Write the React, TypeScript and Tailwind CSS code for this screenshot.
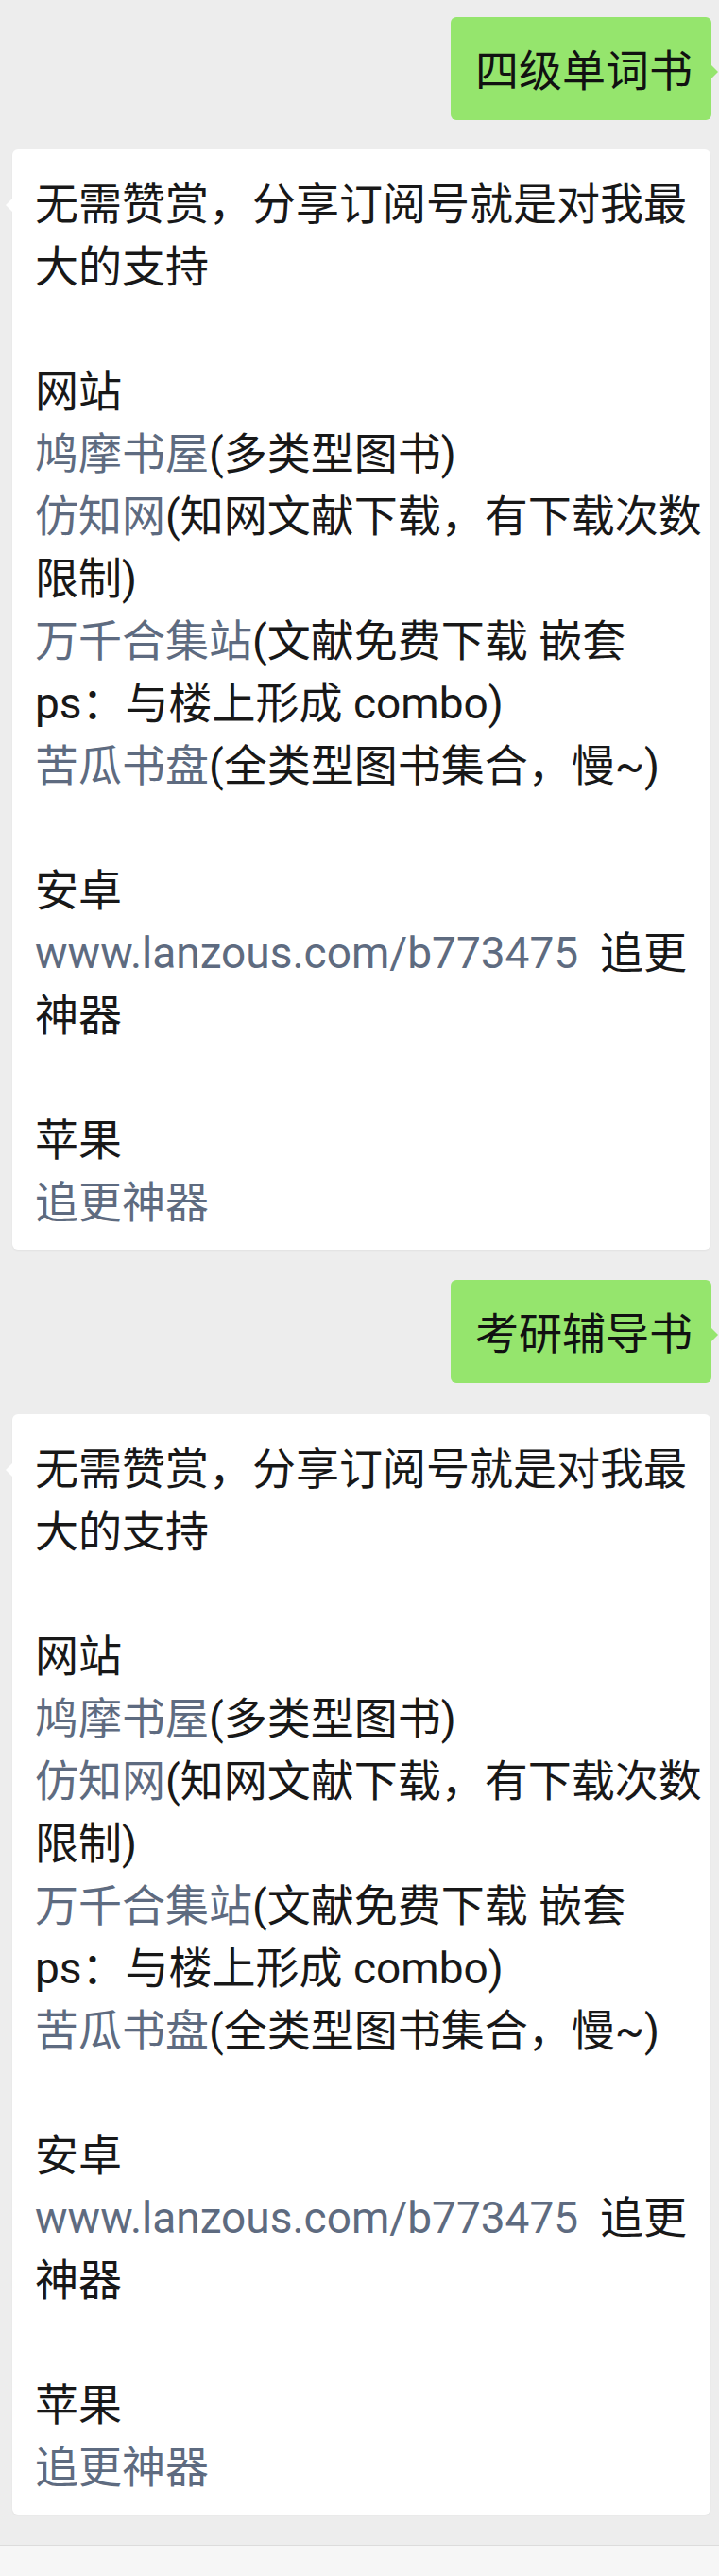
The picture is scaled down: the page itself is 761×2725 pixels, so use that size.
import type { ReactNode } from 'react'

const link = 'text-[#5e6b80]'

function Sent({ children }: { children: ReactNode }) {
  return (
    <div className="self-end mr-[8px] relative">
      <div className="bg-[#95e56d] rounded-[6px] pl-[26px] pr-[20px] pt-[24px] pb-[19px] text-[46px] leading-[66px] text-[#111]">
        {children}
      </div>
      <span className="absolute right-[-7px] top-[50px] w-0 h-0 border-y-[8px] border-y-transparent border-l-[8px] border-l-[#95e56d]" />
    </div>
  )
}

function Blank() {
  return <p className="h-[66px]" />
}

function Received() {
  return (
    <div className="relative ml-[13px] mr-[9px] bg-white rounded-[6px] shadow-[0_1px_2px_rgba(0,0,0,0.05)] pl-[24px] pr-[3px] pt-[25px] pb-[17px] text-[46px] leading-[66px] text-[#181818]">
      <span className="absolute left-[-7px] top-[52px] w-0 h-0 border-y-[7px] border-y-transparent border-r-[7px] border-r-white" />
      <p>无需赞赏，分享订阅号就是对我最大的支持</p>
      <Blank />
      <p>网站</p>
      <p>
        <span className={link}>鸠摩书屋</span>(多类型图书)
      </p>
      <p>
        <span className={link}>仿知网</span>(知网文献下载，有下载次数限制)
      </p>
      <p>
        <span className={link}>万千合集站</span>(文献免费下载 嵌套 ps：与楼上形成 combo)
      </p>
      <p>
        <span className={link}>苦瓜书盘</span>(全类型图书集合，慢~)
      </p>
      <Blank />
      <p>安卓</p>
      <p>
        <span className={link}>www.lanzous.com/b773475</span>{'\u00a0 '}追更神器
      </p>
      <Blank />
      <p>苹果</p>
      <p>
        <span className={link}>追更神器</span>
      </p>
    </div>
  )
}

export default function App() {
  return (
    <div
      className="w-[761px] min-h-[2725px] bg-[#ededed] flex flex-col"
      style={{ fontFamily: 'Roboto, "Noto Sans CJK SC", sans-serif' }}
    >
      <div className="flex flex-col pt-[18px]">
        <Sent>四级单词书</Sent>
        <div className="h-[31px]" />
        <Received />
        <div className="h-[32px]" />
        <Sent>考研辅导书</Sent>
        <div className="h-[33px]" />
        <Received />
      </div>
      <div className="flex-1" />
      <div className="h-[33px] border-t border-[#dcdcdc] bg-[#f6f6f6]" />
    </div>
  )
}
